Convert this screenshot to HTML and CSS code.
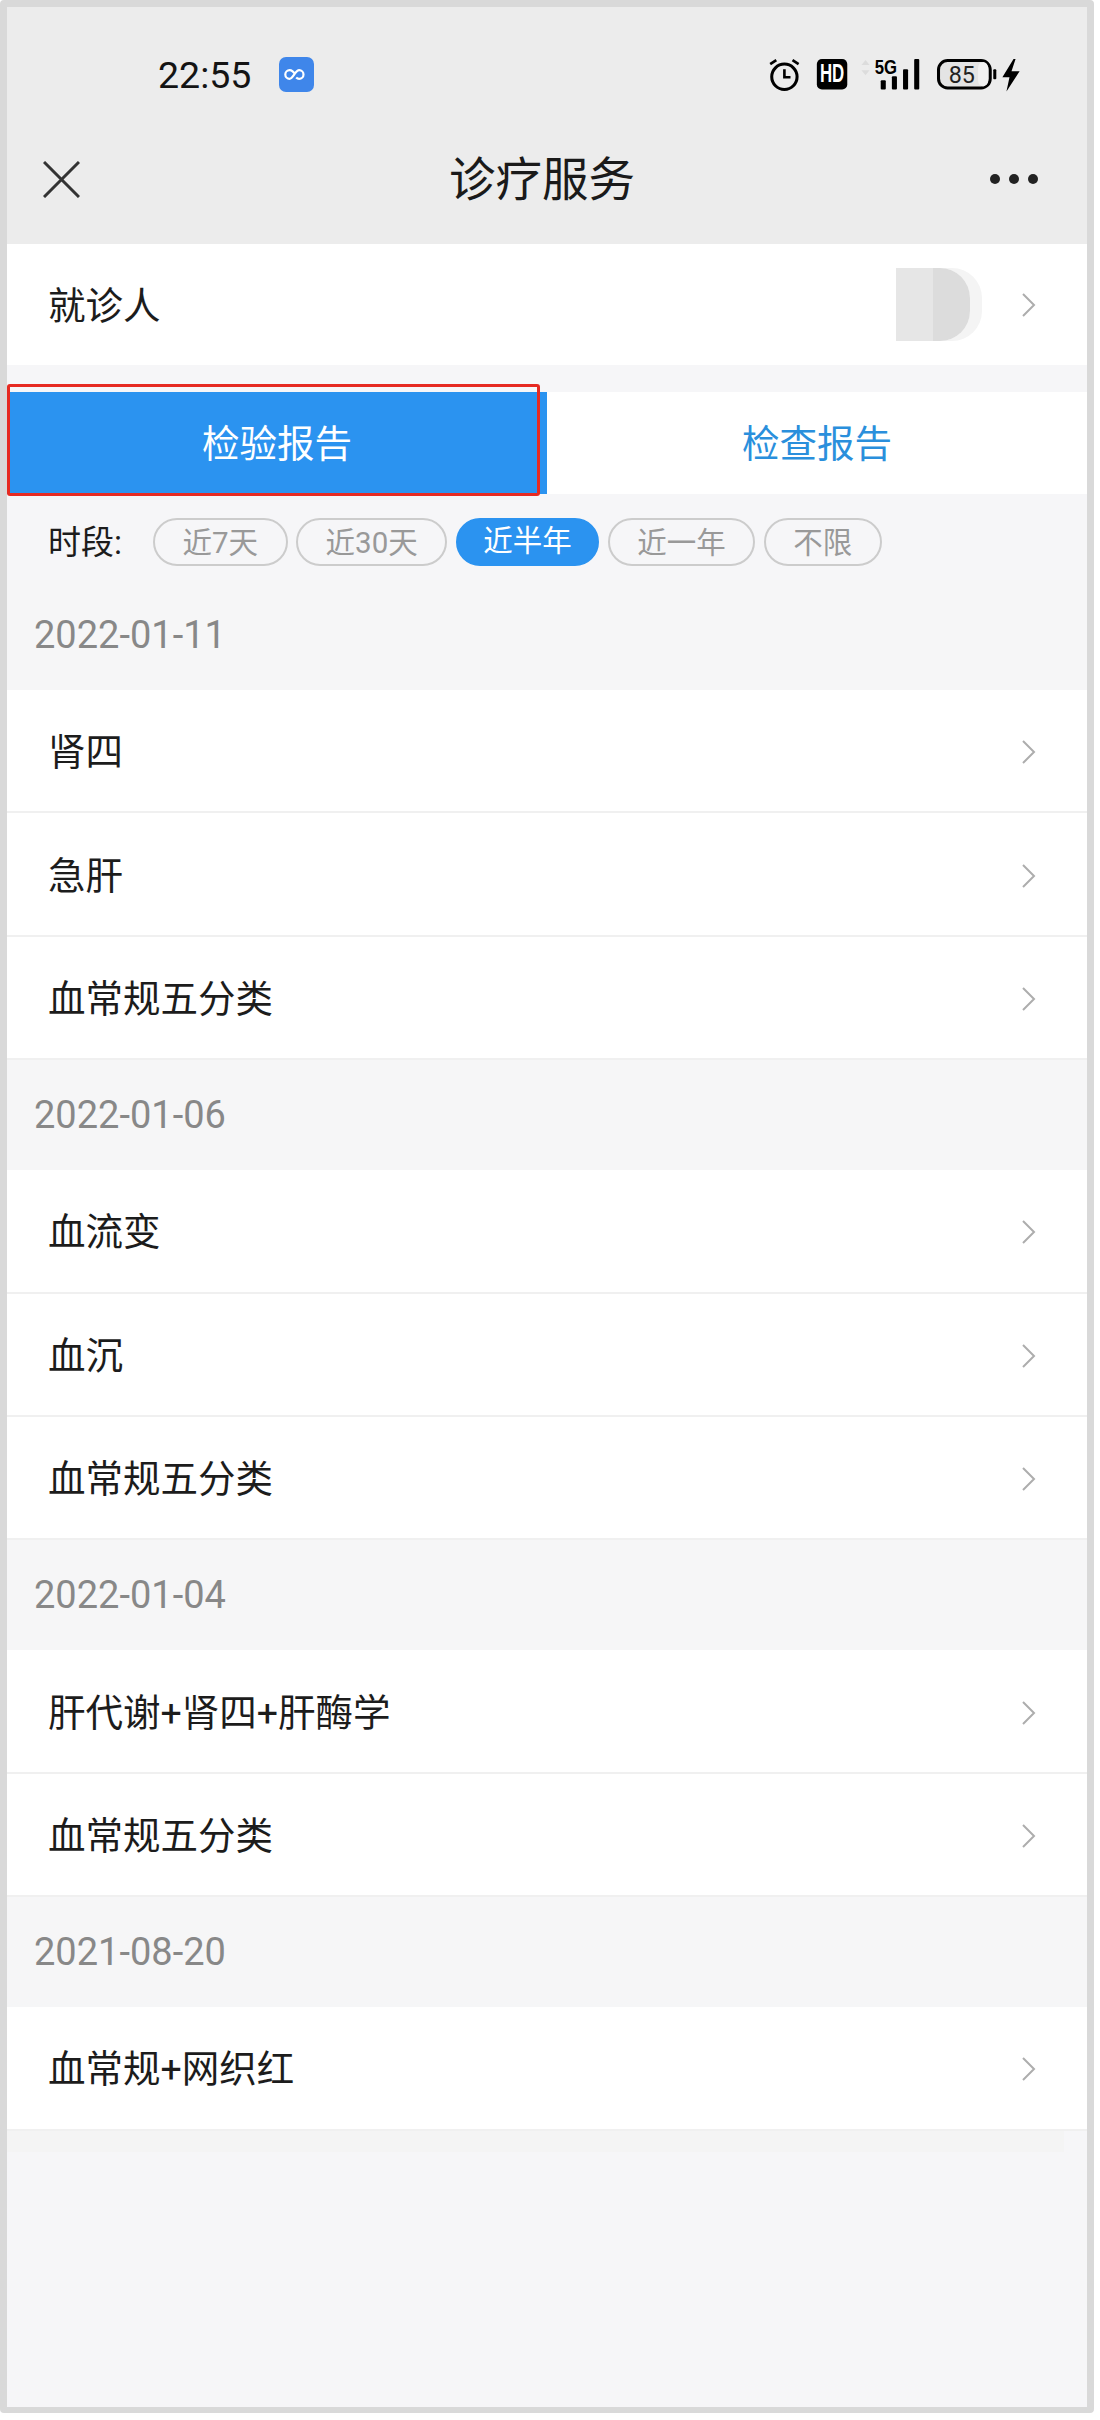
FILE: index.html
```html
<!DOCTYPE html>
<html lang="zh-CN">
<head>
<meta charset="utf-8">
<title>诊疗服务</title>
<link rel="stylesheet" href="styles.css">
</head>
<body>
<div class="frame">
  <header class="top">
    <div class="status">
      <span class="time">22:55</span>
      <svg class="app-icon" viewBox="0 0 35 35"><rect width="35" height="35" rx="7" fill="#3f86ea"/><path d="M16 17.5c-1.6-3-3.4-4.3-5.4-4.3a4.3 4.3 0 0 0 0 8.6c3.6 0 5.6-8.6 9.6-8.6a4.3 4.3 0 0 1 0 8.6c-1.2 0-2.2-.5-3-1.4" fill="none" stroke="#fff" stroke-width="2.2"/></svg>
      <svg class="status-icons" viewBox="0 0 260 36">
        <g fill="none" stroke="#000">
          <circle cx="15" cy="19.500" r="12.500" stroke-width="3"/>
          <path d="M15 12v8h6" stroke-width="2.600"/>
          <path d="M1 7l6-4M29 7l-6-4" stroke-width="2.600"/>
        </g>
        <rect x="47" y="2" width="30" height="30" rx="5" fill="#000"/>
        <text class="hd" x="62" y="24.500" text-anchor="middle" textLength="24" lengthAdjust="spacingAndGlyphs">HD</text>
        <path d="M91 8l4-5 4 5zM91 13l4 5 4-5z" fill="#dcdcdc"/>
        <text class="fiveg" x="104" y="17" textLength="22" lengthAdjust="spacingAndGlyphs">5G</text>
        <g fill="#000">
          <rect x="110" y="23" width="5" height="9" rx="1"/>
          <rect x="121" y="19" width="5" height="13" rx="1"/>
          <rect x="132" y="12" width="5" height="20" rx="1"/>
          <rect x="143" y="2" width="5" height="30" rx="1"/>
        </g>
        <rect x="167" y="3.500" width="51" height="27" rx="9" fill="#e4e4e4" stroke="#000" stroke-width="3"/>
        <rect x="206" y="5" width="10" height="24" rx="6" fill="#f1f1f1"/>
        <text class="batt" x="190" y="25.500" text-anchor="middle">85</text>
        <rect x="221" y="12" width="3" height="10" rx="1" fill="#000"/>
        <path d="M241 2l-11 18h7l-3 14 13-20h-8l4-12z" fill="#000"/>
      </svg>
    </div>
    <nav class="nav">
      <svg class="close" viewBox="0 0 37 37"><path d="M1 1l35 35M36 1L1 36" fill="none" stroke="#333" stroke-width="3"/></svg>
      <h1 class="title">诊疗服务</h1>
      <div class="dots"><i></i><i></i><i></i></div>
    </nav>
  </header>

  <div class="patient">
    <span class="patient-label">就诊人</span>
    <div class="blurred"></div>
    <svg class="chevron" viewBox="0 0 14 24"><path d="M1 1l11 11L1 23"/></svg>
  </div>

  <div class="tabs">
    <div class="tab tab-on">检验报告</div>
    <div class="tab">检查报告</div>
    <div class="redbox"></div>
  </div>

  <div class="filter">
    <span class="filter-label">时段:</span>
    <span class="chip">近7天</span>
    <span class="chip">近30天</span>
    <span class="chip chip-on">近半年</span>
    <span class="chip">近一年</span>
    <span class="chip">不限</span>
  </div>

  <div class="date">2022-01-11</div>
  <div class="row"><span class="row-text">肾四</span><svg class="chevron" viewBox="0 0 14 24"><path d="M1 1l11 11L1 23"/></svg></div>
  <div class="row"><span class="row-text">急肝</span><svg class="chevron" viewBox="0 0 14 24"><path d="M1 1l11 11L1 23"/></svg></div>
  <div class="row"><span class="row-text">血常规五分类</span><svg class="chevron" viewBox="0 0 14 24"><path d="M1 1l11 11L1 23"/></svg></div>

  <div class="date">2022-01-06</div>
  <div class="row"><span class="row-text">血流变</span><svg class="chevron" viewBox="0 0 14 24"><path d="M1 1l11 11L1 23"/></svg></div>
  <div class="row"><span class="row-text">血沉</span><svg class="chevron" viewBox="0 0 14 24"><path d="M1 1l11 11L1 23"/></svg></div>
  <div class="row"><span class="row-text">血常规五分类</span><svg class="chevron" viewBox="0 0 14 24"><path d="M1 1l11 11L1 23"/></svg></div>

  <div class="date">2022-01-04</div>
  <div class="row"><span class="row-text">肝代谢+肾四+肝酶学</span><svg class="chevron" viewBox="0 0 14 24"><path d="M1 1l11 11L1 23"/></svg></div>
  <div class="row"><span class="row-text">血常规五分类</span><svg class="chevron" viewBox="0 0 14 24"><path d="M1 1l11 11L1 23"/></svg></div>

  <div class="date">2021-08-20</div>
  <div class="row"><span class="row-text">血常规+网织红</span><svg class="chevron" viewBox="0 0 14 24"><path d="M1 1l11 11L1 23"/></svg></div>
  <div class="tail"></div>
</div>
</body>
</html>
```

FILE: styles.css
```css
* { box-sizing: border-box; }
html, body { margin: 0; padding: 0; background: #fff; }
body { font-family: Roboto, "Noto Sans CJK SC", sans-serif; color: #1c1c1c; }

.frame {
  width: 1094px;
  height: 2413px;
  border: 7px solid #d9d9d9;
  border-bottom-width: 6px;
  border-radius: 4px;
  background: #f6f6f8;
}

.top { background: #ececec; height: 237px; }

.status {
  height: 136px;
  display: flex;
  align-items: center;
  padding-left: 151px;
}
.time { font-size: 37.500px; width: 121px; color: #141414; }
.app-icon { width: 35px; height: 35px; margin-top: -1px; }
.status-icons { width: 264px; height: 36.500px; margin-left: 455px; }
.hd { font: 700 25px "Liberation Sans", sans-serif; fill: #fff; }
.fiveg { font: 700 20px "Liberation Sans", sans-serif; fill: #000; }
.batt { font: 400 23px Roboto, sans-serif; fill: #222; }

.nav {
  height: 74px;
  display: flex;
  align-items: center;
  padding: 0 49px 0 36px;
}
.close { width: 37px; height: 37px; margin-top: -2px; }
.title {
  margin: 0 0 0 369px;
  font-size: 46.500px;
  font-weight: 400;
  line-height: 74px;
  color: #1a1a1a;
}
.dots { margin-left: auto; display: flex; gap: 9px; margin-top: -2px; }
.dots i { width: 10px; height: 10px; border-radius: 50%; background: #222; }

.patient {
  height: 121px;
  background: #fff;
  display: flex;
  align-items: center;
  padding: 0 51px 0 41px;
  margin-bottom: 27px;
}
.patient-label { font-size: 37.500px; flex: 1; margin-top: -5px; }
.blurred {
  width: 74px;
  height: 73px;
  margin-right: 52px;
  border-radius: 0 30px 30px 0;
  background: linear-gradient(90deg, #e6e6e6 50%, #dcdcdc 50%);
  box-shadow: 12px 0 0 #f4f4f4;
}

.chevron {
  width: 14px;
  height: 24px;
  fill: none;
  stroke: #adadad;
  stroke-width: 2;
  flex: none;
}

.tabs { position: relative; display: flex; height: 102px; background: #fff; }
.tab {
  width: 540px;
  display: flex;
  align-items: center;
  justify-content: center;
  padding-bottom: 5px;
  font-size: 37.500px;
  color: #2a8fdc;
}
.tab-on { background: #2b93f0; color: #fff; }
.redbox {
  position: absolute;
  left: 0;
  top: -8px;
  width: 533px;
  height: 112px;
  border: 3px solid #e62a22;
  border-radius: 3px;
}

.filter {
  display: flex;
  align-items: center;
  gap: 8.500px;
  padding: 24px 0 14px 41px;
}
.filter-label { font-size: 33px; width: 96.500px; margin-top: -4px; color: #1c1c1c; }
.chip {
  height: 48px;
  padding: 0 27.500px;
  border: 2px solid #cccccc;
  border-radius: 24px;
  font-size: 29.500px;
  line-height: 46px;
  color: #999;
}
.chip-on { background: #2b93f0; border-color: #2b93f0; color: #fff; padding: 0 25.500px; line-height: 42px; }

.date {
  height: 110px;
  display: flex;
  align-items: center;
  padding-left: 27px;
  font-size: 38px;
  color: #888;
  background: #f6f6f7;
}

.row {
  height: 123.400px;
  background: #fff;
  border-bottom: 2px solid #f0f0f0;
  display: flex;
  align-items: center;
  justify-content: space-between;
  padding: 0 51px 0 41px;
  font-size: 37.500px;
}
.row .chevron { margin-top: 3px; }
.row-text { margin-top: -4px; }

.tail { height: 21px; width: 1057px; background: #f4f4f4; }
```
